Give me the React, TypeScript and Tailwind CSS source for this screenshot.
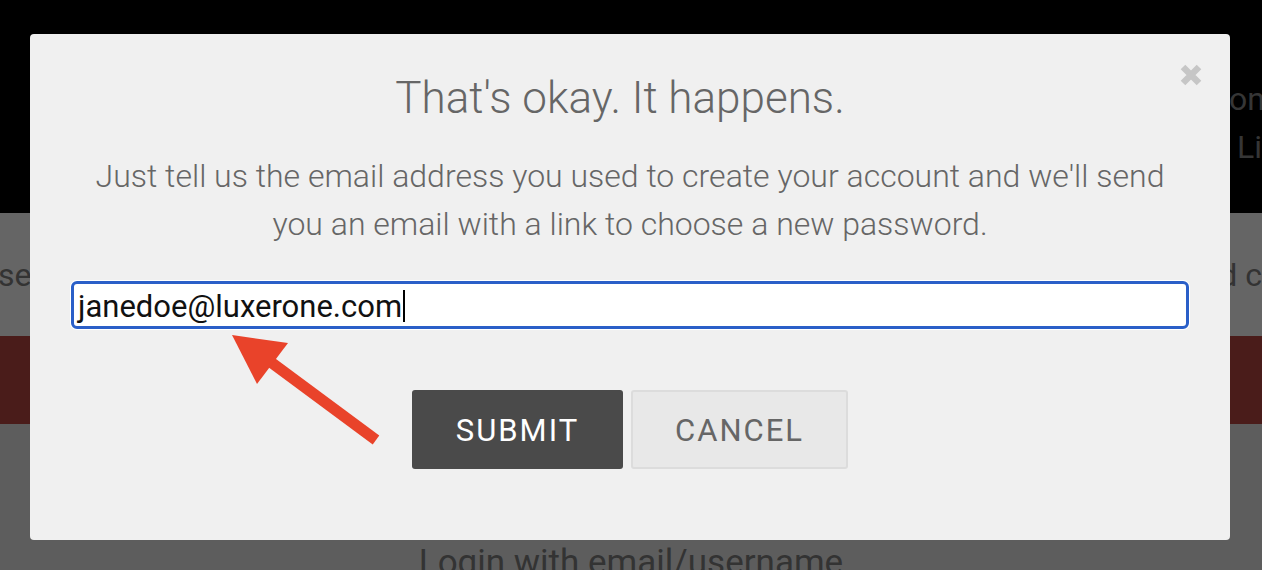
import React from "react"

function CloseIcon() {
  return (
    <svg width="24" height="24" viewBox="0 0 24 24" className="block">
      <path d="M4 4 L20 20 M20 4 L4 20" stroke="#c6c6c6" strokeWidth="6.5" strokeLinecap="butt" />
    </svg>
  )
}

function Arrow() {
  // annotation drawn over the screenshot
  return (
    <svg
      className="pointer-events-none absolute left-0 top-0"
      width="1262"
      height="570"
      viewBox="0 0 1262 570"
    >
      <line x1="268" y1="360" x2="376" y2="440" stroke="#e9432a" strokeWidth="11" />
      <polygon points="232,335 288,343 257,384" fill="#e9432a" />
    </svg>
  )
}

export default function App() {
  return (
    <div
      className="relative h-[570px] w-[1262px] overflow-hidden bg-[#5d5d5d]"
      style={{ fontFamily: "Roboto, 'Noto Sans', sans-serif" }}
    >
      {/* page behind the overlay */}
      <div className="h-[213px] bg-black pt-[75px] text-[32px] leading-[48px] text-[#363636]">
        <div className="whitespace-nowrap pl-[1229px]">on</div>
        <div className="whitespace-nowrap pl-[1237px]">Li</div>
      </div>
      <div className="flex h-[123px] items-center bg-[#656565] text-[32px] text-[#333]">
        <span className="-ml-[2px] w-[1234px] whitespace-nowrap">se</span>
        <span className="whitespace-nowrap">d c</span>
      </div>
      <div className="h-[88px] bg-[#4a1c1a]" />
      <div className="pt-[115px] text-center text-[35px] leading-[48px] text-[#333]">
        Login with email/username
      </div>

      {/* modal */}
      <div className="absolute left-[30px] top-[34px] h-[506px] w-[1200px] rounded-[4px] bg-[#f0f0f0] px-[40px] pt-[38px]">
        <button className="absolute right-[27px] top-[29px]">
          <CloseIcon />
        </button>

        <h2 className="pr-[20px] text-center text-[44px] font-light leading-[52px] text-[#666]">
          That's okay. It happens.
        </h2>

        <p className="-mx-[10px] mt-[28px] text-center text-[32px] font-light leading-[48px] text-[#666]">
          Just tell us the email address you used to create your account and we'll send
          <br />
          you an email with a link to choose a new password.
        </p>

        <div className="mt-[32px] rounded-[7px] bg-white p-px">
          <div className="flex h-[48px] items-center rounded-[6px] border-[3px] border-[#2a5fc8] bg-white pl-[4px] pt-[2px]">
            <span className="text-[31px] leading-none text-[#111]">janedoe@luxerone.com</span>
            <span className="ml-[1px] h-[32px] w-[2px] bg-black" />
          </div>
        </div>

        <div className="mt-[60px] flex justify-center gap-[8px]">
          <button className="h-[79px] w-[211px] rounded-[3px] bg-[#4a4a4a] pt-[3px] text-[31px] tracking-[2px] text-white">
            SUBMIT
          </button>
          <button className="h-[79px] w-[217px] rounded-[3px] border-2 border-[#dcdcdc] bg-[#e8e8e8] pt-[3px] text-[31px] tracking-[2px] text-[#666]">
            CANCEL
          </button>
        </div>
      </div>

      <Arrow />
    </div>
  )
}
